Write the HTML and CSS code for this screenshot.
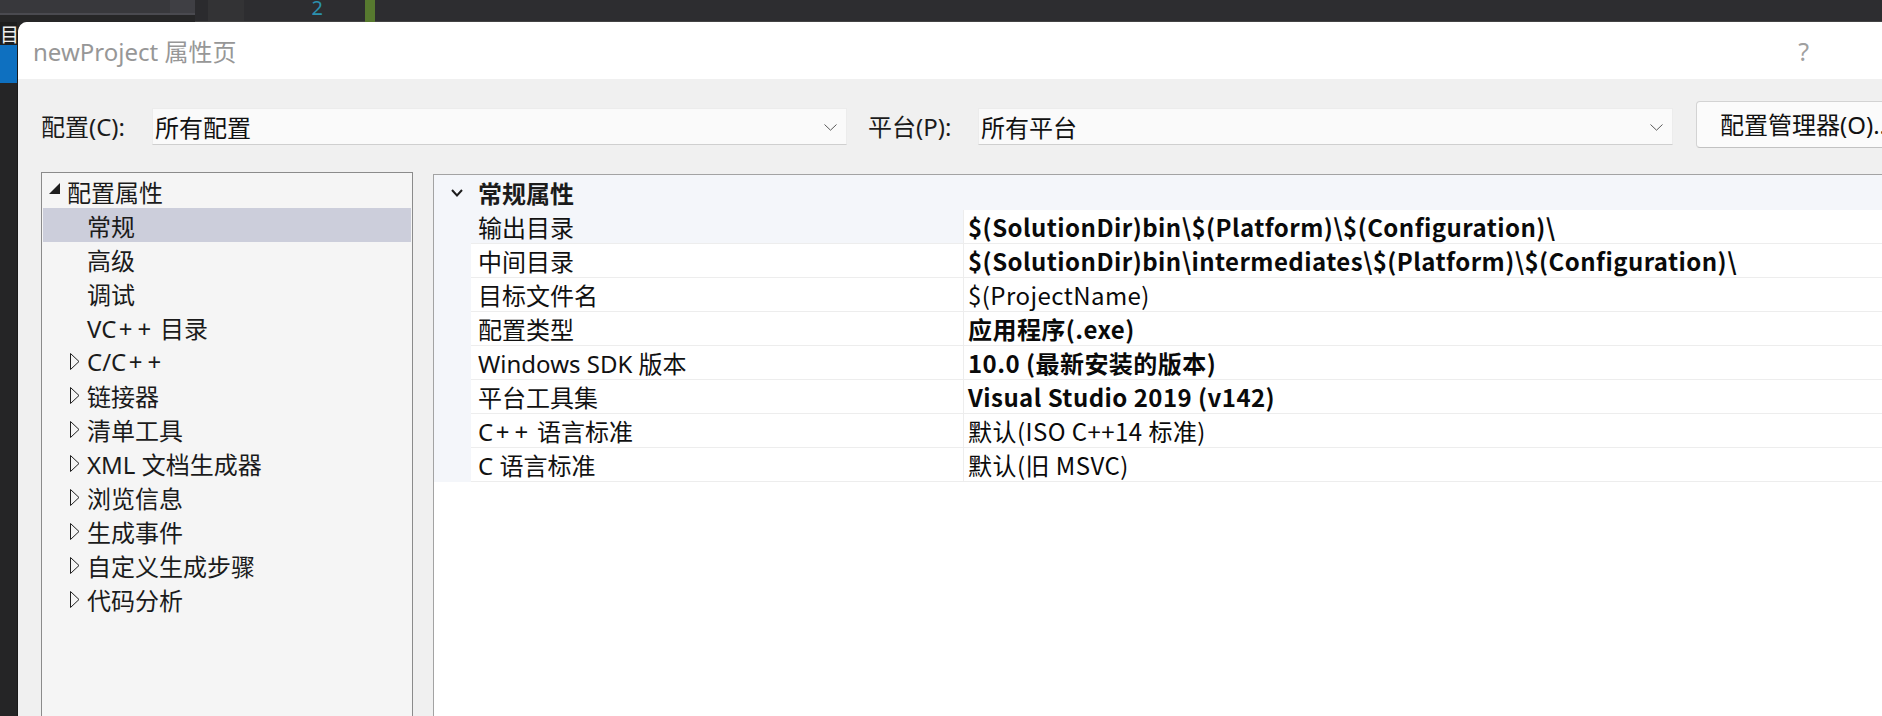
FILE: index.html
```html
<!DOCTYPE html>
<html lang="zh-CN">
<head>
<meta charset="utf-8">
<title>newProject 属性页</title>
<link rel="stylesheet" href="styles.css">
</head>
<body>
<div class="screen">
  <div class="ide-top">
    <div class="tabs"><div class="tabs-hi"></div><div class="tabs-line"></div><div class="tabs-lo"></div></div>
    <div class="tabs2"><div class="tabs2-hi"></div><div class="tabs-line"></div><div class="tabs-lo"></div></div>
    <div class="gut-dark"></div>
    <div class="gut-light"></div>
    <div class="linenum">2</div>
    <div class="gap"></div>
    <div class="change-bar"></div>
    <div class="code"></div>
  </div>
  <div class="main">
    <div class="ide-left">
      <div class="peek">目</div>
      <div class="blue"></div>
      <div class="rest"></div>
    </div>
    <div class="dialog">
      <div class="titlebar">
        <span class="title">newProject 属性页</span>
        <span class="help">?</span>
      </div>
      <div class="toolbar">
        <span class="lbl lbl-c">配置(C):</span>
        <div class="combo">
          <span>所有配置</span>
          <svg class="chev" width="13" height="7" viewBox="0 0 13 7"><polyline points="0.5,0.5 6.5,6.2 12.5,0.5" fill="none" stroke="#5a5a5a" stroke-width="1"/></svg>
        </div>
        <span class="lbl lbl-p">平台(P):</span>
        <div class="combo">
          <span>所有平台</span>
          <svg class="chev" width="13" height="7" viewBox="0 0 13 7"><polyline points="0.5,0.5 6.5,6.2 12.5,0.5" fill="none" stroke="#5a5a5a" stroke-width="1"/></svg>
        </div>
        <div class="btn">配置管理器(O)...</div>
      </div>
      <div class="panes">
        <div class="tree">
          <div class="node lv0"><svg class="tri" width="18" height="12" viewBox="0 0 18 12"><polygon points="11,0 11,11 0,11" fill="#1e1e1e"/></svg><span>配置属性</span></div>
          <div class="node lv1 sel"><span class="slot"></span><span>常规</span></div>
          <div class="node lv1"><span class="slot"></span><span>高级</span></div>
          <div class="node lv1"><span class="slot"></span><span>调试</span></div>
          <div class="node lv1"><span class="slot"></span><span>VC<span class="pl">+</span><span class="pl">+</span> 目录</span></div>
          <div class="node lv1"><svg class="tri2" width="17" height="17" viewBox="0 0 17 17"><polygon points="0.5,0.5 9,8.5 0.5,16.5" fill="none" stroke="#1e1e1e" stroke-width="1"/></svg><span>C/C<span class="pl">+</span><span class="pl">+</span></span></div>
          <div class="node lv1"><svg class="tri2" width="17" height="17" viewBox="0 0 17 17"><polygon points="0.5,0.5 9,8.5 0.5,16.5" fill="none" stroke="#1e1e1e" stroke-width="1"/></svg><span>链接器</span></div>
          <div class="node lv1"><svg class="tri2" width="17" height="17" viewBox="0 0 17 17"><polygon points="0.5,0.5 9,8.5 0.5,16.5" fill="none" stroke="#1e1e1e" stroke-width="1"/></svg><span>清单工具</span></div>
          <div class="node lv1"><svg class="tri2" width="17" height="17" viewBox="0 0 17 17"><polygon points="0.5,0.5 9,8.5 0.5,16.5" fill="none" stroke="#1e1e1e" stroke-width="1"/></svg><span>XML 文档生成器</span></div>
          <div class="node lv1"><svg class="tri2" width="17" height="17" viewBox="0 0 17 17"><polygon points="0.5,0.5 9,8.5 0.5,16.5" fill="none" stroke="#1e1e1e" stroke-width="1"/></svg><span>浏览信息</span></div>
          <div class="node lv1"><svg class="tri2" width="17" height="17" viewBox="0 0 17 17"><polygon points="0.5,0.5 9,8.5 0.5,16.5" fill="none" stroke="#1e1e1e" stroke-width="1"/></svg><span>生成事件</span></div>
          <div class="node lv1"><svg class="tri2" width="17" height="17" viewBox="0 0 17 17"><polygon points="0.5,0.5 9,8.5 0.5,16.5" fill="none" stroke="#1e1e1e" stroke-width="1"/></svg><span>自定义生成步骤</span></div>
          <div class="node lv1"><svg class="tri2" width="17" height="17" viewBox="0 0 17 17"><polygon points="0.5,0.5 9,8.5 0.5,16.5" fill="none" stroke="#1e1e1e" stroke-width="1"/></svg><span>代码分析</span></div>
        </div>
        <div class="grid">
          <div class="g-head">
            <svg class="g-chev" width="12" height="8" viewBox="0 0 12 8"><polyline points="1,1 6,6.5 11,1" fill="none" stroke="#1e1e1e" stroke-width="2"/></svg>
            <span class="b">常规属性</span>
          </div>
          <div class="g-row first"><div class="g-gut"></div><div class="g-name"><span>输出目录</span></div><div class="g-val b"><span>$(SolutionDir)bin\$(Platform)\$(Configuration)\</span></div></div>
          <div class="g-row"><div class="g-gut"></div><div class="g-name"><span>中间目录</span></div><div class="g-val b"><span>$(SolutionDir)bin\intermediates\$(Platform)\$(Configuration)\</span></div></div>
          <div class="g-row"><div class="g-gut"></div><div class="g-name"><span>目标文件名</span></div><div class="g-val"><span>$(ProjectName)</span></div></div>
          <div class="g-row"><div class="g-gut"></div><div class="g-name"><span>配置类型</span></div><div class="g-val b"><span>应用程序(.exe)</span></div></div>
          <div class="g-row"><div class="g-gut"></div><div class="g-name"><span>Windows SDK 版本</span></div><div class="g-val b"><span>10.0 (最新安装的版本)</span></div></div>
          <div class="g-row"><div class="g-gut"></div><div class="g-name"><span>平台工具集</span></div><div class="g-val b"><span>Visual Studio 2019 (v142)</span></div></div>
          <div class="g-row"><div class="g-gut"></div><div class="g-name"><span>C<span class="pl">+</span><span class="pl">+</span> 语言标准</span></div><div class="g-val"><span>默认(ISO C++14 标准)</span></div></div>
          <div class="g-row"><div class="g-gut"></div><div class="g-name"><span>C 语言标准</span></div><div class="g-val"><span>默认(旧 MSVC)</span></div></div>
        </div>
      </div>
    </div>
  </div>
</div>
</body>
</html>
```

FILE: styles.css
```css
html, body {
  margin: 0;
  padding: 0;
}
body {
  width: 1882px;
  height: 716px;
  overflow: hidden;
  background: #252526;
  font-family: "Noto Sans", "Noto Sans CJK SC", sans-serif;
  color: #1b1b1b;
}
.screen {
  display: flex;
  flex-direction: column;
  height: 716px;
}

/* IDE background strip */
.ide-top {
  height: 22px;
  flex: none;
  display: flex;
  background: #2d2d30;
  box-sizing: border-box;
}
.tabs { width: 170px; display: flex; flex-direction: column; }
.tabs2 { width: 25px; display: flex; flex-direction: column; }
.tabs-hi { height: 13px; background: #38383c; }
.tabs2-hi { height: 13px; background: #3f3f44; }
.tabs-line { height: 2px; background: #4a4a50; }
.tabs-lo { flex: 1; background: #262627; }
.gut-dark { width: 13px; background: #2b2b2e; border-bottom: 1px solid #444; box-sizing: border-box; }
.gut-light { width: 36px; background: #333335; border-bottom: 1px solid #444; box-sizing: border-box; }
.linenum {
  width: 81px;
  text-align: right;
  color: #2b91af;
  font-family: "Noto Sans", sans-serif;
  font-size: 20px;
  line-height: 16px;
  padding-right: 2px;
  box-sizing: border-box;
  border-bottom: 1px solid #444;
}
.gap { width: 40px; border-bottom: 1px solid #444; box-sizing: border-box; }
.change-bar { width: 10px; background: #57792f; }
.code { flex: 1; border-bottom: 1px solid #444; box-sizing: border-box; }

.main {
  flex: 1;
  display: flex;
  min-height: 0;
}
.ide-left {
  width: 17px;
  flex: none;
  display: flex;
  flex-direction: column;
  overflow: hidden;
}
.peek {
  height: 23px;
  background: #1e1e1e;
  color: #f0f0f0;
  font-family: "Noto Sans CJK SC", sans-serif;
  font-size: 19px;
  line-height: 23px;
  white-space: nowrap;
}
.blue { height: 38px; background: #0e70c0; }
.rest { flex: 1; background: #252526; }

/* dialog */
.dialog {
  flex: 1;
  background: #f0f0f0;
  border-left: 1px solid #1a1a1a;
  border-top-left-radius: 10px;
  overflow: hidden;
  display: flex;
  flex-direction: column;
  min-width: 0;
}
.titlebar {
  height: 57px;
  flex: none;
  background: #ffffff;
  display: flex;
  align-items: center;
  justify-content: space-between;
  padding: 0 73px 0 15px;
  color: #979797;
  font-size: 24px;
}
.title { white-space: nowrap; }
.help { font-size: 25px; color: #a0a0a0; }

.toolbar {
  flex: none;
  display: flex;
  align-items: flex-start;
  padding: 22px 0 0 23px;
  font-size: 24px;
  white-space: nowrap;
}
.lbl {
  flex: none;
  margin-top: 7px;
  height: 37px;
  line-height: 37px;
  color: #1b1b1b;
}
.lbl-c { width: 111px; }
.lbl-p { width: 110px; margin-left: 21px; }
.combo {
  flex: none;
  width: 695px;
  height: 37px;
  margin-top: 7px;
  box-sizing: border-box;
  background: #fafafa;
  border: 1px solid #ececec;
  border-bottom-color: #cfcfcf;
  display: flex;
  align-items: center;
  justify-content: space-between;
  padding: 0 9px 0 2px;
  color: #111;
}
.chev { flex: none; margin-top: 1px; }
.btn {
  flex: none;
  margin-left: 23px;
  height: 47px;
  box-sizing: border-box;
  padding-left: 23px;
  width: 320px;
  line-height: 45px;
  background: #fbfbfb;
  border: 1px solid #d3d3d3;
  border-bottom-color: #c2c2c2;
  border-radius: 4px;
  color: #111;
}

.panes {
  flex: 1;
  display: flex;
  align-items: flex-start;
  gap: 20px;
  padding-left: 23px;
  margin-top: 24px;
  min-height: 0;
}
.tree {
  flex: none;
  width: 372px;
  height: 620px;
  box-sizing: border-box;
  border: 1px solid #8b8b8b;
  background: #f5f5f5;
  padding: 1px;
}
.node {
  height: 34px;
  display: flex;
  align-items: center;
  font-size: 24px;
  white-space: nowrap;
  color: #1b1b1b;
}
.node.lv0 { padding-left: 6px; }
.node.lv1 { padding-left: 27px; }
.node.sel { background: #cccedb; }
.slot { width: 17px; flex: none; }
.tri { flex: none; margin-bottom: 5px; }
.tri2 { flex: none; }
.pl { margin: 0 2.5px; }

.grid {
  flex: none;
  width: 1500px;
  height: 620px;
  margin-top: 2px;
  box-sizing: border-box;
  border: 1px solid #a3a3a3;
  background: #ffffff;
  font-size: 24px;
  white-space: nowrap;
}
.g-head {
  height: 35px;
  background: #f4f6fa;
  display: flex;
  align-items: center;
  padding-left: 17px;
}
.g-chev { flex: none; margin-right: 15px; }
.b { font-weight: 700; }
.g-row {
  height: 34px;
  display: flex;
}
.g-gut {
  width: 37px;
  flex: none;
  background: #f4f6fa;
}
.g-name {
  width: 493px;
  flex: none;
  box-sizing: border-box;
  padding-left: 7px;
  border-right: 1px solid #ededed;
  border-bottom: 1px solid #ededed;
  display: flex;
  align-items: center;
  color: #111;
}
.g-row.first .g-name { background: #f4f6fa; }
.g-val {
  flex: 1;
  box-sizing: border-box;
  padding-left: 4px;
  border-bottom: 1px solid #ededed;
  display: flex;
  align-items: center;
  font-family: "Noto Sans CJK SC", sans-serif;
  color: #0a0a0a;
  letter-spacing: 0.45px;
}
```
